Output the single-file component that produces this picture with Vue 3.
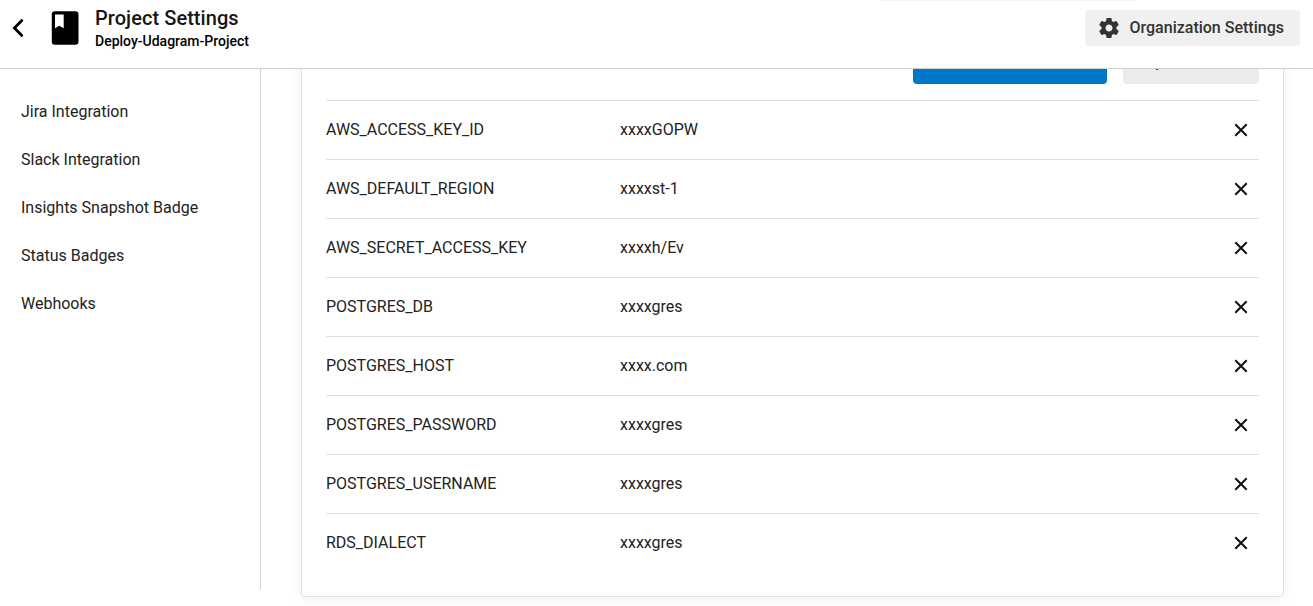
<script setup>
const links = ['Jira Integration', 'Slack Integration', 'Insights Snapshot Badge', 'Status Badges', 'Webhooks']
const variables = [
  { name: 'AWS_ACCESS_KEY_ID', value: 'xxxxGOPW' },
  { name: 'AWS_DEFAULT_REGION', value: 'xxxxst-1' },
  { name: 'AWS_SECRET_ACCESS_KEY', value: 'xxxxh/Ev' },
  { name: 'POSTGRES_DB', value: 'xxxxgres' },
  { name: 'POSTGRES_HOST', value: 'xxxx.com' },
  { name: 'POSTGRES_PASSWORD', value: 'xxxxgres' },
  { name: 'POSTGRES_USERNAME', value: 'xxxxgres' },
  { name: 'RDS_DIALECT', value: 'xxxxgres' },
]
</script>

<template>
  <div class="page">
    <header class="header">
      <div class="notch"></div>
      <svg class="back" width="12" height="20" viewBox="0 0 12 20">
        <path d="M9.800 2.400 2.400 10l7.400 7.600" fill="none" stroke="#000" stroke-width="2.800" stroke-linecap="round" />
      </svg>
      <svg class="book" width="28" height="34" viewBox="-0.500 0 28 34">
        <path fill-rule="evenodd" d="M3.500 0.300h20.300a3.200 3.200 0 0 1 3.200 3.200v27a3.200 3.200 0 0 1-3.200 3.200h-20.300a3.200 3.200 0 0 1-3.200-3.200v-27a3.200 3.200 0 0 1 3.200-3.200zM3.500 3.500v13.700l4.300-2.400 4.400 2.400V3.500z" />
      </svg>
      <div class="titles">
        <h1>Project Settings</h1>
        <div class="sub">Deploy-Udagram-Project</div>
      </div>
      <button class="org">
        <svg width="20" height="20" viewBox="2 2 20 20">
          <path fill="#333" d="M19.430 12.980c.04-.32.07-.64.07-.98s-.03-.66-.07-.98l2.110-1.650c.19-.15.24-.42.12-.64l-2-3.460c-.12-.22-.39-.3-.61-.22l-2.490 1c-.52-.4-1.080-.73-1.690-.98l-.38-2.650C14.460 2.180 14.250 2 14 2h-4c-.25 0-.46.18-.49.42l-.38 2.650c-.61.25-1.170.59-1.690.98l-2.490-1c-.23-.09-.49 0-.61.22l-2 3.460c-.13.22-.07.49.12.64l2.110 1.650c-.04.32-.07.65-.07.98s.03.66.07.98l-2.110 1.650c-.19.15-.24.42-.12.64l2 3.460c.12.22.39.3.61.22l2.490-1c.52.4 1.080.73 1.690.98l.38 2.650c.03.24.24.42.49.42h4c.25 0 .46-.18.49-.42l.38-2.650c.61-.25 1.170-.59 1.690-.98l2.490 1c.23.09.49 0 .61-.22l2-3.460c.12-.22.07-.49-.12-.64l-2.110-1.650zM12 15.500c-1.930 0-3.500-1.570-3.500-3.500s1.570-3.500 3.500-3.500 3.500 1.570 3.500 3.500-1.570 3.500-3.500 3.500z" />
        </svg>
        <span>Organization Settings</span>
      </button>
    </header>
    <div class="body">
      <nav class="side">
        <a v-for="l in links" :key="l">{{ l }}</a>
      </nav>
      <main class="main">
        <section class="card">
          <div class="actions">
            <button class="btn primary"></button>
            <button class="btn import">Import Variables</button>
          </div>
          <div v-for="v in variables" :key="v.name" class="row">
            <span class="name">{{ v.name }}</span>
            <span class="value">{{ v.value }}</span>
            <svg width="14" height="14" viewBox="0 0 14 14">
              <path d="M1.300 1.300 12.700 12.700M12.700 1.300 1.300 12.700" fill="none" stroke="#111" stroke-width="2" />
            </svg>
          </div>
        </section>
      </main>
    </div>
  </div>
</template>

<style>
body { margin: 0; overflow: hidden; background: #fff; }
</style>

<style scoped>
* { box-sizing: border-box; }
.page {
  display: flex;
  flex-direction: column;
  width: 1313px;
  height: 606px;
  overflow: hidden;
  font: 400 16px/20px Roboto, sans-serif;
  color: #222;
}
button { border: 0; padding: 0; font: 500 16px/20px Roboto, sans-serif; border-radius: 4px; }
.header {
  position: relative;
  display: flex;
  align-items: flex-start;
  flex: 0 0 69px;
  padding: 0 13px 0 12px;
  border-bottom: 1px solid #d0d0d0;
}
.notch {
  position: absolute;
  left: 882px;
  top: 0;
  width: 254px;
  height: 1px;
  background: #f3f3f3;
}
.back { margin-top: 18px; }
.book { margin: 11px 16px 0 27px; }
.titles { flex: 1; }
h1 { margin: 6px 0 0; font-size: 20px; line-height: 24px; font-weight: 500; letter-spacing: 0.06px; color: #161616; }
.sub { margin-top: 3px; font-size: 14px; line-height: 16px; font-weight: 500; color: #000; }
.org {
  display: flex;
  align-items: center;
  gap: 10.500px;
  width: 215px;
  height: 36px;
  margin-top: 10px;
  padding-left: 14px;
  background: #f0f0f0;
  color: #333;
}
.body { display: flex; flex: 1; min-height: 0; overflow: hidden; }
.side {
  display: flex;
  flex-direction: column;
  gap: 28px;
  width: 261px;
  height: 520px;
  padding: 33px 0 0 21px;
  border-right: 1px solid #d0d0d0;
}
.main { flex: 1; padding: 0 29px 0 40px; }
.card {
  height: 548px;
  margin-top: -20px;
  padding: 0 24px;
  border: 1px solid #e0e0e0;
  border-radius: 4px;
  box-shadow: 0 2px 14px rgba(0, 0, 0, 0.06);
}
.actions {
  display: flex;
  justify-content: flex-end;
  gap: 16px;
  height: 50px;
}
.btn { height: 36px; margin-top: -2px; }
.primary { width: 194px; background: #0078ca; }
.import { width: 136px; padding: 0 0 8px 10px; background: #ebebeb; color: #333; }
.row {
  display: flex;
  align-items: center;
  height: 59px;
  padding-right: 11px;
  border-top: 1px solid #e0e0e0;
}
.name { width: 294px; }
.value { flex: 1; }
</style>
